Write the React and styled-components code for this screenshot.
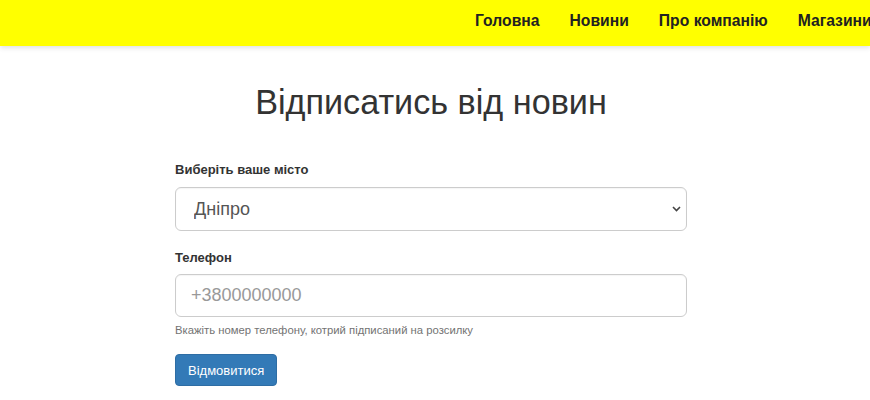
import React from "react";
import styled, { createGlobalStyle } from "styled-components";

const Global = createGlobalStyle`
  html, body { margin: 0; padding: 0; background: #fff; }
  body { font-family: "Liberation Sans", Arial, sans-serif; color: #333; }
  * { box-sizing: border-box; }
`;

const Header = styled.header`
  height: 46px;
  background: #ffff00;
  box-shadow: 0 2px 5px rgba(0, 0, 0, 0.12);
  overflow: hidden;
`;

const Nav = styled.nav`
  display: flex;
  align-items: center;
  height: 100%;
  padding: 0 0 4px 460px;
  white-space: nowrap;
`;

const NavLink = styled.a`
  padding: 0 15px;
  font-size: 15.7px;
  font-weight: 700;
  color: #222;
  text-decoration: none;
  flex-shrink: 0;
`;

const Main = styled.main`
  width: 512px;
  margin-left: 175px;
  padding-top: 38.3px;
`;

const Title = styled.h1`
  margin: 0 0 39.5px;
  font-size: 34.2px;
  font-weight: 400;
  line-height: 1.1;
  color: #333;
  text-align: center;
`;

const Group = styled.div`
  margin-bottom: ${(p) => p.$mb ?? 18}px;
`;

const Label = styled.label`
  display: block;
  margin-bottom: 6.5px;
  font-size: 13px;
  font-weight: 700;
  line-height: 18.6px;
  color: #333;
`;

const SelectWrap = styled.div`
  position: relative;
`;

const Select = styled.select`
  display: block;
  width: 100%;
  height: 44px;
  padding: 0 40px 0 18px;
  border: 1px solid #ccc;
  border-radius: 6px;
  background: #fff;
  font-family: inherit;
  font-size: 18px;
  color: #555;
  appearance: none;
  -webkit-appearance: none;
  box-shadow: inset 0 1px 1px rgba(0, 0, 0, 0.04);
`;

const Chevron = styled.svg`
  position: absolute;
  right: 6px;
  top: 50%;
  margin-top: -3px;
  pointer-events: none;
`;

const Input = styled.input`
  display: block;
  width: 100%;
  height: 43px;
  padding: 0 15px;
  border: 1px solid #ccc;
  border-radius: 6px;
  background: #fff;
  font-family: inherit;
  font-size: 18px;
  color: #555;
  box-shadow: inset 0 1px 1px rgba(0, 0, 0, 0.04);
  &::placeholder { color: #999; }
`;

const Help = styled.p`
  margin: 5.5px 0 0;
  font-size: 11.3px;
  line-height: 17px;
  color: #737373;
`;

const Button = styled.button`
  display: inline-block;
  height: 32px;
  margin-top: 15px;
  padding: 0 12px;
  border: 1px solid #2e6da4;
  border-radius: 4px;
  background: #337ab7;
  color: #fff;
  font-family: inherit;
  font-size: 13px;
  cursor: pointer;
`;

export default function App() {
  return (
    <>
      <Global />
      <Header>
        <Nav>
          <NavLink href="#">Головна</NavLink>
          <NavLink href="#">Новини</NavLink>
          <NavLink href="#">Про компанію</NavLink>
          <NavLink href="#">Магазини</NavLink>
          <NavLink href="#">Контакти</NavLink>
        </Nav>
      </Header>
      <Main>
        <Title>Відписатись від новин</Title>
        <Group>
          <Label htmlFor="city">Виберіть ваше місто</Label>
          <SelectWrap>
            <Select id="city" defaultValue="dnipro">
              <option value="dnipro">Дніпро</option>
              <option value="kyiv">Київ</option>
              <option value="lviv">Львів</option>
            </Select>
            <Chevron width="9" height="6" viewBox="0 0 9 6">
              <path d="M1 1l3.5 3.5L8 1" fill="none" stroke="#444" strokeWidth="1.6" />
            </Chevron>
          </SelectWrap>
        </Group>
        <Group $mb={0}>
          <Label htmlFor="phone">Телефон</Label>
          <Input id="phone" type="tel" placeholder="+3800000000" />
          <Help>Вкажіть номер телефону, котрий підписаний на розсилку</Help>
        </Group>
        <Button type="button">Відмовитися</Button>
      </Main>
    </>
  );
}
